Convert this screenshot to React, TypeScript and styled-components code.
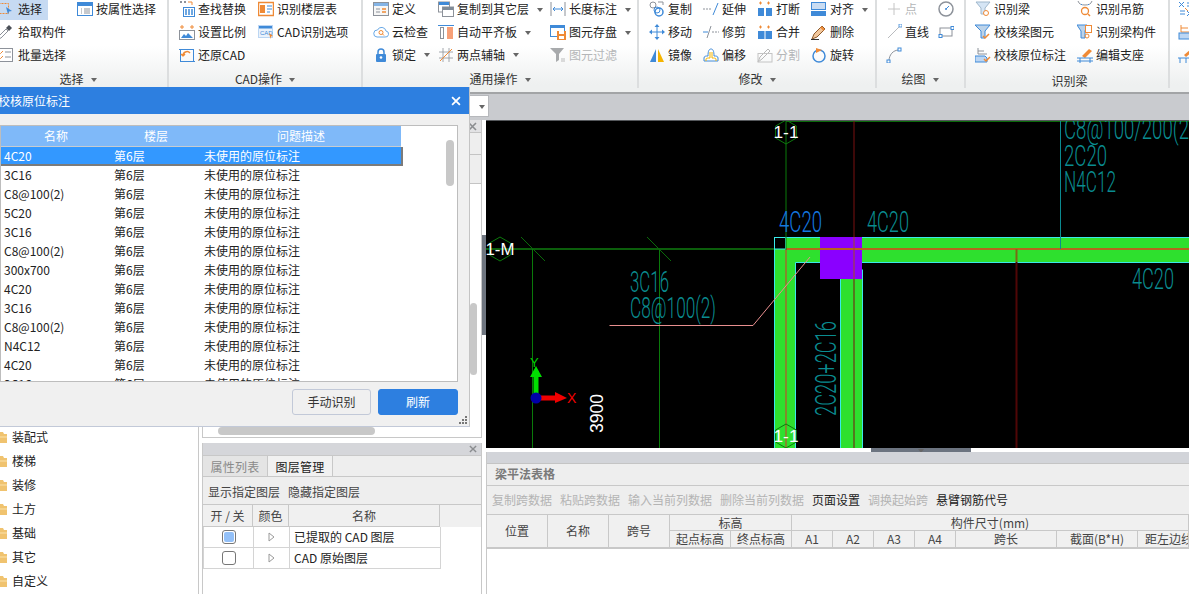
import React from "react";
import styled, { createGlobalStyle } from "styled-components";

const Global = createGlobalStyle`
  html, body { margin: 0; padding: 0; background: #fff; overflow: hidden; }
  body { font-family: "Noto Sans CJK SC", "Liberation Sans", sans-serif; font-size: 12px; color: #222; }
  * { box-sizing: border-box; }
`;

const Page = styled.div`
  position: relative; width: 1189px; height: 594px; overflow: hidden; display: flex; flex-direction: column;
`;

/* ---------- ribbon ---------- */
const Ribbon = styled.div`
  display: flex; height: 94px; flex: none; margin-left: -3px; overflow: hidden;
  background: linear-gradient(#fff 50%, #eef0f0 92%);
  border-bottom: 2px solid #a2a4a6;
`;
const Group = styled.div<{ $w: number; $pl: number }>`
  position: relative; flex: none; width: ${p => p.$w}px; padding-left: ${p => p.$pl}px; height: 88px;
  border-right: 2px solid #dcdedf; display: flex; flex-direction: column;
`;
const Rows = styled.div<{ $cols: string }>`
  margin-top: -3px; height: 69px; flex: none; display: grid; grid-template-columns: ${p => p.$cols}; grid-template-rows: 24px 22px 23px; align-items: center;
`;
const Tool = styled.div<{ $active?: boolean; $gap?: number; $off?: boolean }>`
  display: inline-flex; align-items: center; gap: ${p => p.$gap ?? 3}px; justify-self: start; white-space: nowrap; line-height: 20px; height: 21px;
  color: ${p => (p.$off ? "#b4b6b8" : "#222")};
  background: ${p => (p.$active ? "#c6daf2" : "transparent")};
  padding-right: ${p => (p.$active ? 6 : 0)}px;
  svg { flex: none; }
`;
const Caret = styled.i<{ $ml?: number }>`
  display: inline-block; width: 0; height: 0; margin-left: ${p => p.$ml ?? 5}px; margin-top: 1px;
  border-left: 3px solid transparent; border-right: 3px solid transparent; border-top: 4px solid #666;
`;
const GroupLabel = styled.div<{ $shift?: number; $low?: boolean }>`
  display: flex; align-items: center; justify-content: center; gap: 2px; line-height: 18px; color: #333;
  margin-left: -${p => p.$shift ?? 5}px; padding-right: ${p => p.$shift ?? 5}px;
  margin-top: ${p => (p.$low ? 6 : 4)}px;
`;

/* ---------- band ---------- */
const Band = styled.div`
  height: 26px; flex: none; background: #c9cbcf; padding: 1px 0 0 400px;
`;
const Combo = styled.div`
  width: 89px; height: 22px; background: #fff; border: 1px solid #b6b8bc; display: flex; align-items: center; justify-content: flex-end; padding-right: 3px;
`;

/* ---------- main ---------- */
const Main = styled.div`
  flex: 1; display: flex; min-height: 0;
`;
const Tree = styled.div`
  width: 199px; flex: none; border-right: 1px solid #c8c8c8; display: flex; flex-direction: column; justify-content: flex-end; padding-bottom: 1px;
`;
const TreeItem = styled.div`
  height: 24px; display: flex; align-items: center; gap: 5px; line-height: 24px; color: #222;
`;
const Middle = styled.div`
  width: 280px; flex: none; margin-left: 3px; display: flex; flex-direction: column;
`;
const Upper = styled.div`
  position: relative; height: 318px; flex: none; border: 1px solid #c8c8c8; border-top: 0;
`;
const PanelHead = styled.div<{ $h: number; $bg: string }>`
  height: ${p => p.$h}px; background: ${p => p.$bg}; display: flex; align-items: center; justify-content: flex-end; padding-right: 4px;
`;
const PropRow = styled.div<{ $h: number }>`
  height: ${p => p.$h}px; background: #eeeeee; border-top: 1px solid #c4c4c4;
`;
const VBar = styled.div`
  position: absolute; right: 4px; top: 183px; width: 7px; height: 72px; border-radius: 4px; background: #c8c8c8;
`;
const HBar = styled.div`
  position: absolute; left: 15px; top: 307px; width: 157px; height: 8px; border-radius: 4px; background: #c8c8c8;
`;
const Lower = styled.div`
  margin-top: 5px; flex: 1; border: 1px solid #c8c8c8; border-top: 0; border-bottom: 0; min-height: 0;
`;
const Tabs = styled.div`
  height: 22px; display: flex; background: #eeeeee; border-top: 1px solid #c8c8c8; border-bottom: 1px solid #c8c8c8;
`;
const Tab = styled.div<{ $on?: boolean }>`
  width: 65px; text-align: center; line-height: 21px; letter-spacing: 0.3px; border-right: 1px solid #c8c8c8;
  color: ${p => (p.$on ? "#222" : "#8a8a8a")}; background: ${p => (p.$on ? "#f1f1f1" : "#e4e4e4")};
`;
const LayerBar = styled.div`
  height: 28px; background: #eeeeee; padding: 2px 0 0 5px; display: flex; gap: 8px; align-items: center; line-height: 20px; color: #444; border-bottom: 1px solid #c8c8c8;
`;
const LayerHead = styled.div`
  display: grid; grid-template-columns: 50px 36px 151px; height: 22px; background: #f0f0f0; color: #444; margin-left: 0;
`;
const LayerHeadCell = styled.div`
  text-align: center; line-height: 21px; border-right: 1px solid #c8c8c8; border-bottom: 1px solid #c8c8c8; white-space: pre;
`;
const LayerRow = styled.div`
  display: grid; grid-template-columns: 50px 36px 151px; height: 21px; width: 238px; border-bottom: 1px solid #d4d4d4; border-left: 1px solid #d4d4d4;
`;
const LayerCell = styled.div<{ $text?: boolean }>`
  border-right: 1px solid #d4d4d4; display: flex; align-items: center; justify-content: ${p => (p.$text ? "flex-start" : "center")};
  padding-left: ${p => (p.$text ? 4 : 0)}px; line-height: 20px; white-space: pre; color: #222;
`;
const Check = styled.div<{ $on?: boolean }>`
  width: 14px; height: 14px; border: 1px solid #777; border-radius: 3px; padding: 1px; background: #fff;
  &::after { content: ""; display: block; width: 10px; height: 10px; border-radius: 2px; background: ${p => (p.$on ? "#93c0f8" : "transparent")}; }
`;

const Gutter = styled.div`
  width: 4px; flex: none; background: #fff; padding-top: 115px;
`;
const GutterHandle = styled.div`
  width: 4px; height: 100px; background: #6f7680;
`;
const Right = styled.div`
  flex: 1; min-width: 0; display: flex; flex-direction: column;
`;
const CanvasWrap = styled.div`
  height: 328px; flex: none; background: #000; border-top: 1px solid #55585c;
  svg { display: block; }
`;
const Splitter = styled.div`
  height: 4px; flex: none; padding-left: 385px; background: #fff;
`;
const SplitHandle = styled.div`
  width: 100px; height: 4px; background: #6c7480; display: flex; justify-content: center;
`;
const Bottom = styled.div`
  flex: 1; border-left: 1px solid #c8c8c8; min-height: 0;
`;
const BottomHead = styled.div`
  height: 12px; background: #d2d4d9; border-bottom: 1px solid #c4c4c4;
`;
const BottomTitle = styled.div`
  height: 22px; background: #eeeeee; border-bottom: 1px solid #c8c8c8; padding-left: 8px; line-height: 20px; font-weight: 700; color: #7a7a7a;
`;
const BottomBar = styled.div`
  height: 29px; background: #eeeeee; border-bottom: 1px solid #c8c8c8; padding-left: 5px; display: flex; gap: 8px; align-items: center; line-height: 20px; white-space: nowrap;
`;
const BarItem = styled.span<{ $off?: boolean }>`
  color: ${p => (p.$off ? "#b4b4b4" : "#222")};
`;
const BeamGrid = styled.div`
  display: grid; height: 34px; background: #f0f0f0; color: #444; overflow: hidden; border-bottom: 1px solid #c8c8c8;
  grid-template-columns: 61px 61px 61px 61px 61px 41px 41px 41px 41px 101px 81px 1fr; grid-template-rows: 16px 17px;
`;
const BeamCell = styled.div<{ $col?: number; $row?: number; $clip?: boolean }>`
  grid-column: span ${p => p.$col ?? 1}; grid-row: span ${p => p.$row ?? 1};
  display: flex; align-items: center; justify-content: ${p => (p.$clip ? "flex-start" : "center")}; padding-left: ${p => (p.$clip ? 7 : 0)}px;
  white-space: nowrap; overflow: hidden; line-height: 16px;
  border-right: 1px solid #c8c8c8; border-bottom: 1px solid #c8c8c8;
`;

/* ---------- dialog ---------- */
const Dialog = styled.div`
  position: absolute; left: -12px; top: 87px; width: 482px; height: 340px; background: #f0f0f0;
  border-right: 1px solid #c4c4c4; border-bottom: 1px solid #c2c9d8; display: flex; flex-direction: column;
`;
const DialogTitle = styled.div`
  height: 27px; flex: none; background: #2d7fe0; color: #fff; padding: 0 8px 0 10px; display: flex; align-items: center; justify-content: space-between; line-height: 27px;
`;
const ListBox = styled.div`
  position: relative; margin: 11px 0 0 12px; width: 458px; height: 257px; flex: none; border: 1px solid #bdbdbd; background: #fff; overflow: hidden;
`;
const ListHead = styled.div`
  display: grid; grid-template-columns: 110px 90px 200px; width: 400px; height: 21px; background: #7fb9f9; color: #fff; border-bottom: 1px solid #c8ccd0;
`;
const ListHeadCell = styled.div`
  text-align: center; line-height: 20px;
`;
const ListRow = styled.div<{ $sel?: boolean }>`
  display: grid; grid-template-columns: 110px 90px 200px; height: 19px; width: ${p => (p.$sel ? 402 : 400)}px; line-height: 18px;
  background: ${p => (p.$sel ? "#3398ff" : "transparent")}; color: ${p => (p.$sel ? "#fff" : "#222")};
  border-right: ${p => (p.$sel ? "2px solid #7b7b7b" : "0")}; border-bottom: ${p => (p.$sel ? "2px solid #7b7b7b" : "0")};
`;
const ListCell = styled.div`
  padding-left: 3px; white-space: nowrap;
`;
const ListScroll = styled.div`
  position: absolute; right: 3px; top: 14px; width: 8px; height: 46px; border-radius: 4px; background: #c8c8c8;
`;
const DialogFoot = styled.div`
  width: 470px; display: flex; justify-content: flex-end; gap: 7px; margin-top: 7px;
`;
const Btn = styled.button<{ $primary?: boolean }>`
  width: ${p => (p.$primary ? 80 : 79)}px; height: 26px; border-radius: 3px; font: inherit; line-height: 20px; padding: 0;
  border: 1px solid ${p => (p.$primary ? "#2d7fe0" : "#c2c9d8")};
  background: ${p => (p.$primary ? "#2d7fe0" : "#f0f0f0")}; color: ${p => (p.$primary ? "#fff" : "#333")};
`;
const Grip = styled.div`
  position: absolute; right: 2px; bottom: 2px; width: 8px; height: 8px; display: grid; grid-template-columns: repeat(3, 2px); grid-template-rows: repeat(3, 2px); gap: 1px;
`;
const GripDot = styled.span<{ $c: number; $r: number }>`
  grid-column: ${p => p.$c}; grid-row: ${p => p.$r}; background: #777;
`;

/* ---------- icons ---------- */
const B = "#3f8ad8", O = "#ef8a36", G = "#8d929a", L = "#bcd6f3";
const S: React.FC<{ children: React.ReactNode }> = ({ children }) => (
  <svg width="16" height="16" viewBox="0 0 16 16" fill="none">{children}</svg>
);
const icons: Record<string, React.ReactNode> = {
  select: <><rect x="1.5" y="2.5" width="10" height="10" stroke={O} strokeDasharray="2 1" /><path d="M9 6l6 4-3 .6-1 3z" fill={B} /></>,
  attr: <><rect x=".5" y="1.5" width="15" height="13" fill="#fff" stroke={B} /><rect x="1" y="2" width="14" height="3" fill={B} /><path d="M4 8h1M7 8h6M4 10h1M7 10h6M4 12h1M7 12h6" stroke={G} /></>,
  pick: <><path d="M1 15l1-3 7-7 2 2-7 7z" fill="#fff" stroke={G} /><path d="M9 4l3-3 3 3-3 3z" fill="#4a4f57" /></>,
  batch: <><rect x=".5" y="1.5" width="15" height="13" fill="#fff" stroke={G} /><path d="M2 5l1.5 1.5L6 4M2 10l1.5 1.5L6 9" stroke={O} /><path d="M8 5h6M8 10h6" stroke={G} /></>,
  find: <><path d="M1 1h2M5 1h2" stroke={G} strokeWidth="2" /><path d="M9 1h4v3" stroke={O} /><rect x="4.500" y="6.500" width="11" height="9" fill="#fff" stroke={B} /><path d="M7 8v6M10 8v6M13 8v6" stroke={B} strokeWidth="1.500" /></>,
  floor: <><rect x=".5" y="1.5" width="15" height="13" fill="#fff" stroke={O} strokeWidth="1.500" /><rect x="2" y="4" width="5" height="8" fill={O} /><path d="M9 5h5M9 8h5M9 11h3" stroke={B} /></>,
  scale: <><path d="M1 3h4M3 1v4M11 3h4M13 1v4" stroke={O} /><rect x=".5" y="6.500" width="15" height="9" fill="#fff" stroke={G} /><path d="M2 14l3-4 2 2 2-3 5 5z" fill={B} /></>,
  cadopt: <><rect x=".5" y="1.5" width="14" height="12" fill="#eaf2fb" stroke={L} /><rect x="1" y="2" width="13" height="2.500" fill={B} /><text x="2" y="11" fontSize="6" fill={B} fontFamily="Liberation Sans">CAD</text><path d="M11 9l4 3-2 .5-.5 2.500z" fill={O} /></>,
  restore: <><rect x="1.500" y="2.500" width="13" height="12" stroke={B} /><path d="M4 9a4 4 0 0 1 7-3M4 9l-2-2M4 9l2-2" stroke={O} strokeWidth="1.500" /><path d="M0 2.500h3M13 14.500h3" stroke={B} /></>,
  define: <><rect x=".5" y="1.500" width="15" height="13" fill="#f6f6f6" stroke={G} /><rect x="1" y="2" width="14" height="3" fill="#84b4e6" /><path d="M3 8h4M3 11h4" stroke={G} /><path d="M9 8h4M9 11h4" stroke={O} strokeWidth="1.500" /></>,
  cloud: <><path d="M4 13h8a3 3 0 0 0 1-6 4.500 4.500 0 0 0-8.500-1A3.500 3.500 0 0 0 4 13z" fill="#fff" stroke="#68a8e6" /><circle cx="8" cy="8.500" r="2" stroke={O} /><path d="M9.500 10l1.500 1.500" stroke={O} /></>,
  lock: <><path d="M5 7V5a3 3 0 0 1 6 0v2" stroke={B} strokeWidth="1.500" /><rect x="3" y="7" width="10" height="8" rx="1" fill={B} /><circle cx="8" cy="10.500" r="1.300" fill="#fff" /></>,
  copyLayer: <><rect x=".5" y="1" width="11" height="10" fill="#fff" stroke={G} /><rect x="1" y="1" width="10" height="3" fill={B} /><rect x="4.500" y="6" width="11" height="9.500" fill="#fff" stroke={G} /><rect x="5" y="6" width="10" height="3" fill="#7f8b98" /></>,
  level: <><path d="M0 1.500h16" stroke={B} /><rect x="2.500" y="3.500" width="3" height="11" fill="#fff" stroke={G} /><rect x="9" y="3" width="6" height="12" fill="#f7a078" /></>,
  axis: <><path d="M5 1v14M11 1v14M1 5h14M1 11h14" stroke={G} strokeWidth=".8" /><path d="M2 14L14 2" stroke={O} /></>,
  length: <><path d="M1 1v14M15 1v14" stroke={G} /><path d="M3 8h10M3 8l2-2M3 8l2 2M13 8l-2-2M13 8l-2 2" stroke={B} /></>,
  save: <><rect x=".5" y="1.500" width="14" height="11" fill="#fff" stroke={B} /><rect x="1" y="2" width="13" height="2" fill={B} /><rect x="7" y="7" width="9" height="9" fill={O} /><rect x="9" y="7" width="5" height="3" fill="#fff" /><rect x="9" y="12" width="5" height="3" fill="#fff" /></>,
  filter: <><path d="M0 1h14L9 7v6l-3 2V7z" fill="#a8aaac" /><path d="M11 12h4M11 14h4" stroke="#bbb" /></>,
  copy: <><circle cx="4" cy="4" r="3" stroke={G} /><circle cx="10" cy="11" r="4" stroke={B} strokeWidth="1.500" /><circle cx="8" cy="9" r="3" stroke={B} /><path d="M9 1h5v3" stroke={G} /></>,
  move: <><path d="M8 2v12M2 8h12" stroke={B} /><path d="M8 0l2.500 3h-5zM8 16l2.500-3h-5zM0 8l3-2.500v5zM16 8l-3-2.500v5z" fill={B} /></>,
  mirror: <><path d="M7 2v13H1z" fill={B} /><path d="M9 2v13h6z" fill="#f5b400" /></>,
  extend: <><path d="M0 8h8" stroke={G} strokeDasharray="2 1" /><path d="M10 14l5-12" stroke={B} /></>,
  trim: <><path d="M0 8h5" stroke={B} /><path d="M9 8h7" stroke={G} strokeDasharray="2 1" /><path d="M4 14l4-12" stroke={G} /></>,
  offset: <><path d="M1 14v-3c0-2 2-2 4-2 0-5 1-7 3-7s3 2 3 7c2 0 4 0 4 2v3z" fill="#fff" stroke={B} /><path d="M3 14v-2c0-1 2-1 4-1V5M9 5v6c2 0 4 0 4 1v2" stroke="#f5b400" /></>,
  breakI: <><path d="M2 2h3M3.500 0.500v3M10 2h3M11.500.5v3" stroke={O} /><rect x="1" y="7" width="6" height="8" fill={B} /><rect x="9" y="7" width="6" height="8" fill={B} /></>,
  merge: <><path d="M2 3h3M3.500 1.500v3M10 3h3M11.500 1.500v3" stroke={O} /><rect x="1" y="7" width="14" height="8" fill={B} /><path d="M8 7v8" stroke="#fff" /></>,
  split: <><path d="M1 15l2-5 8-8 2 2-8 8z" stroke="#b8b8b8" /><rect x="1" y="6.500" width="14" height="8.500" stroke="#c4c4c4" /></>,
  align: <><rect x=".5" y="1.500" width="14" height="7" fill="#c9dcf2" stroke={B} /><rect x="0" y="10" width="15" height="5" fill={B} /></>,
  del: <><path d="M1 15l2-5 8-8 3 3-8 8z" fill="#f2c79c" stroke="#8d5a2b" /><path d="M10 3l3 3" stroke={O} strokeWidth="2" /><path d="M0 15.500h8" stroke="#333" /></>,
  rotate: <><circle cx="8" cy="9" r="6" stroke={B} strokeWidth="1.500" /><path d="M5 1l6 2-6 3z" fill={O} /></>,
  point: <path d="M8 2v12M2 8h12" stroke="#c4c4c4" />,
  circle: <><circle cx="8" cy="8" r="7" stroke={G} strokeWidth="1.500" /><path d="M8 8l3-3" stroke={B} /><circle cx="8" cy="8" r="1" fill={B} /></>,
  line: <><path d="M2 14L14 2" stroke="#b9bbbe" /><rect x="13" y="0" width="3" height="3" fill="#fff" stroke={B} strokeWidth=".8" /></>,
  rect: <><rect x="2" y="4" width="12" height="8" stroke={G} /><rect x="1" y="10.500" width="3" height="3" fill="#fff" stroke={B} /><rect x="13" y="2.500" width="3" height="3" fill="#fff" stroke={B} /></>,
  arc: <><path d="M3 14C3 8 7 3 13 3" stroke={G} /><rect x="1" y="13" width="3" height="3" fill="#fff" stroke={B} /><rect x="12" y="1" width="3" height="3" fill="#fff" stroke={B} /></>,
  beam: <><path d="M1 1h14l-5 6v6H6V7z" fill="#d5e5f5" stroke="#9fb7cc" /><circle cx="11" cy="12" r="2.500" fill="#fff" stroke={O} /></>,
  beamChk: <><path d="M0 1h15l-5 6v7H6V7z" fill="#bcd3ea" stroke={B} /><path d="M8 12l2 2 4-4" stroke={O} strokeWidth="1.500" /></>,
  origChk: <><path d="M3 1v6h9M3 4h6" stroke={G} /><path d="M0 9h10l2 2v4H0z" fill="#bcd6f3" stroke={B} /><path d="M9 12l2 2 4-4" stroke={O} strokeWidth="1.500" /></>,
  hang: <><path d="M1 0c1 3 3 4 7 4s6-1 7-4" stroke={G} /><path d="M4 3l1 1M11 3l1 1" stroke={B} /><circle cx="8" cy="10" r="3.500" stroke={O} strokeWidth="1.300" /><path d="M11 13l2 2" stroke={O} strokeWidth="1.500" /></>,
  beamComp: <><path d="M0 1h10L8 7v7H4V7z" fill="#bcd3ea" stroke={B} /><rect x="8.500" y="1.500" width="6" height="7" fill="#fff" stroke={O} /><circle cx="10" cy="12" r="2" stroke={O} /></>,
  support: <><path d="M5 9l7-7 3 2-7 7z" fill={O} /><path d="M0 11h16M0 14h16M3 11v5M13 11v5" stroke={B} /></>,
  r1: <><path d="M1 1l5 5M6 1L1 6M9 2h6M9 5h6M2 10h5M2 13h5M9 10l5 5M14 10l-5 5" stroke={B} /><path d="M7 7l3 3" stroke={O} /></>,
  r2: <><path d="M3 1v7h10M3 4h7" stroke={O} /><rect x="1" y="9" width="14" height="6" fill="#bcd6f3" stroke={B} /></>,
  r3: <><path d="M6 8l7-6 2 2-7 6z" fill={O} /><path d="M0 11h16M2 11v5M14 11v5M8 11v5" stroke={B} /></>,
};
const Ic: React.FC<{ n: string }> = ({ n }) => <S>{icons[n]}</S>;
const T: React.FC<{ n?: string; t?: string; caret?: boolean; off?: boolean; active?: boolean; gap?: number }> = ({ n, t, caret, off, active, gap }) => (
  <Tool $off={off} $active={active} $gap={gap}>
    {n && <Ic n={n} />}
    {t && <span>{t}</span>}
    {caret && <Caret />}
  </Tool>
);
const Close: React.FC<{ c?: string; s?: number }> = ({ c = "#fff", s = 9 }) => (
  <svg width={s} height={s} viewBox="0 0 9 9"><path d="M1 1l7 7M8 1L1 8" stroke={c} strokeWidth="1.600" /></svg>
);
const Folder = () => (
  <svg width="7" height="12" viewBox="0 0 7 12"><path d="M0 1h3l1 2h3v9H0z" fill="#f0c36f" /><path d="M0 6h7" stroke="#fbe2ac" /></svg>
);
const TriIcon = () => (
  <svg width="7" height="10" viewBox="0 0 7 10"><path d="M1 1l5 4-5 4z" fill="#fff" stroke="#9a9a9a" /></svg>
);

/* ---------- canvas drawing ---------- */
const CadT: React.FC<{ x: number; y: number; w: number; c?: string; rot?: boolean; children: string }> = ({ x, y, w, c = "#0a8c90", rot, children }) => (
  <text x={x} y={y} fontFamily="Roboto" fontWeight={300} fontSize="30" fill={c} textLength={w} lengthAdjust="spacingAndGlyphs"
    transform={rot ? `rotate(-90 ${x} ${y})` : undefined}>{children}</text>
);
const hex = (cx: number, cy: number, r = 12) =>
  [0, 1, 2, 3, 4, 5].map(i => { const a = (Math.PI / 3) * i - Math.PI / 2; return `${cx + r * Math.cos(a)},${cy + r * Math.sin(a)}`; }).join(" ");
const Hex: React.FC<{ x: number; y: number; t: string; w: number }> = ({ x, y, t, w }) => (
  <>
    <polygon points={hex(x, y)} fill="none" stroke="#0c7a0c" />
    <text x={x - w / 2} y={y + 6} fontFamily="Liberation Sans" fontSize="16" fill="#fff" textLength={w} lengthAdjust="spacingAndGlyphs">{t}</text>
  </>
);
const Drawing = () => (
  <svg width="703" height="327" viewBox="486 121 703 327">
    <rect x="486" y="120" width="703" height="328" fill="#000" />
    {/* beams */}
    <path d="M774.500 460V237.500H1195V262.500H795.500V460z" fill="#2ee02e" stroke="#39eaea" />
    <rect x="840.500" y="270" width="22" height="190" fill="#2ee02e" stroke="#39eaea" />
    <rect x="774.500" y="237.500" width="11" height="11.500" fill="#000" stroke="#39eaea" />
    <rect x="820" y="237" width="42" height="42" fill="#8a00ff" />
    {/* axes */}
    <path d="M786 121h403" stroke="#0a6a0a" strokeWidth="2" />
    <path d="M486 249h288" stroke="#0b5e0b" strokeWidth="2" />
    <path d="M786 249h403" stroke="#b4651e" strokeWidth="2" />
    <path d="M532.500 249v199M659.500 249v199M786 120v130" stroke="#0a7a0a" />
    <path d="M521 237l24 24M647 237l24 24" stroke="#0a6a0a" />
    <path d="M786 250v198" stroke="#d8332b" />
    <path d="M854 120v117M854 279v169" stroke="#7a1010" />
    <path d="M854 237v42" stroke="#a05020" />
    <path d="M1016.500 262v186" stroke="#500606" strokeWidth="2" />
    <path d="M1016.500 249v13" stroke="#7a6a14" strokeWidth="2" />
    <path d="M1060.500 120v129" stroke="#0b8a90" />
    {/* leader */}
    <path d="M609.500 325.500H753L810 257" fill="none" stroke="#e88f8f" />
    {/* labels */}
    <CadT x={779} y={232} w={43} c="#1478e0">4C20</CadT>
    <CadT x={867} y={232} w={42}>4C20</CadT>
    <CadT x={1132} y={289} w={42}>4C20</CadT>
    <CadT x={630} y={292} w={39}>3C16</CadT>
    <CadT x={630} y={318} w={86}>C8@100(2)</CadT>
    <CadT x={836} y={416} w={95} rot>2C20+2C16</CadT>
    <CadT x={1064} y={139} w={125}>C8@100/200(2</CadT>
    <CadT x={1064} y={166} w={43}>2C20</CadT>
    <CadT x={1064} y={192} w={52}>N4C12</CadT>
    <text x={603} y={433} fontFamily="Liberation Sans" fontSize="19" fill="#fff" textLength={39} lengthAdjust="spacingAndGlyphs" transform="rotate(-90 603 433)">3900</text>
    <Hex x={786} y={132} t="1-1" w={25} />
    <Hex x={786} y={436} t="1-1" w={25} />
    <Hex x={500} y={249} t="1-M" w={29} />
    {/* UCS */}
    <path d="M536 398v-27" stroke="#00e000" strokeWidth="5" />
    <path d="M536 366l6 11h-12z" fill="#00e000" />
    <path d="M536 398h22" stroke="#f00000" strokeWidth="5" />
    <path d="M567 398l-12-6v11z" fill="#f00000" />
    <circle cx="536" cy="398" r="5.500" fill="#0000a8" />
    <text x={530} y={367} fontFamily="Liberation Sans" fontSize="13" fill="#00d000">Y</text>
    <text x={567} y={403} fontFamily="Liberation Sans" fontSize="14" fill="#f00000">X</text>
  </svg>
);

const rows = ["4C20", "3C16", "C8@100(2)", "5C20", "3C16", "C8@100(2)", "300x700", "4C20", "3C16", "C8@100(2)", "N4C12", "4C20", "3C16"];
const tree = ["装配式", "楼梯", "装修", "土方", "基础", "其它", "自定义"];

export default function App() {
  return (
    <Page>
      <Global />
      <Ribbon>
        <Group $w={172} $pl={0}>
          <Rows $cols="80px 1fr">
            <T n="select" t="选择" active gap={5} /><T n="attr" t="按属性选择" />
            <T n="pick" t="拾取构件" gap={5} /><span />
            <T n="batch" t="批量选择" gap={5} /><span />
          </Rows>
          <GroupLabel $shift={4}>选择<Caret /></GroupLabel>
        </Group>
        <Group $w={194} $pl={10}>
          <Rows $cols="79px 1fr">
            <T n="find" t="查找替换" /><T n="floor" t="识别楼层表" />
            <T n="scale" t="设置比例" /><T n="cadopt" t="CAD识别选项" />
            <T n="restore" t="还原CAD" /><span />
          </Rows>
          <GroupLabel>CAD操作<Caret /></GroupLabel>
        </Group>
        <Group $w={276} $pl={10}>
          <Rows $cols="65px 112px 1fr">
            <T n="define" t="定义" /><T n="copyLayer" t="复制到其它层" caret /><T n="length" t="长度标注" caret />
            <T n="cloud" t="云检查" /><T n="level" t="自动平齐板" caret /><T n="save" t="图元存盘" caret />
            <T n="lock" t="锁定" caret /><T n="axis" t="两点辅轴" caret /><T n="filter" t="图元过滤" off />
          </Rows>
          <GroupLabel>通用操作<Caret /></GroupLabel>
        </Group>
        <Group $w={238} $pl={10}>
          <Rows $cols="54px 54px 54px 1fr">
            <T n="copy" t="复制" /><T n="extend" t="延伸" /><T n="breakI" t="打断" /><T n="align" t="对齐" caret />
            <T n="move" t="移动" /><T n="trim" t="修剪" /><T n="merge" t="合并" /><T n="del" t="删除" />
            <T n="mirror" t="镜像" /><T n="offset" t="偏移" /><T n="split" t="分割" off /><T n="rotate" t="旋转" />
          </Rows>
          <GroupLabel>修改<Caret /></GroupLabel>
        </Group>
        <Group $w={89} $pl={9}>
          <Rows $cols="52px 1fr">
            <T n="point" t="点" off /><T n="circle" />
            <T n="line" t="直线" /><T n="rect" />
            <T n="arc" /><span />
          </Rows>
          <GroupLabel>绘图<Caret /></GroupLabel>
        </Group>
        <Group $w={204} $pl={9}>
          <Rows $cols="102px 1fr">
            <T n="beam" t="识别梁" /><T n="hang" t="识别吊筋" />
            <T n="beamChk" t="校核梁图元" /><T n="beamComp" t="识别梁构件" />
            <T n="origChk" t="校核原位标注" /><T n="support" t="编辑支座" />
          </Rows>
          <GroupLabel $low $shift={2}>识别梁</GroupLabel>
        </Group>
        <Group $w={30} $pl={8}>
          <Rows $cols="1fr">
            <T n="r1" />
            <T n="r2" />
            <T n="r3" />
          </Rows>
        </Group>
      </Ribbon>
      <Band>
        <Combo><Caret $ml={0} /></Combo>
      </Band>
      <Main>
        <Tree>
          {tree.map(t => <TreeItem key={t}><Folder />{t}</TreeItem>)}
        </Tree>
        <Middle>
          <Upper>
            <PanelHead $h={12} $bg="#e2e2e4"><Close c="#8b8d90" /></PanelHead>
            <PropRow $h={22} />
            <PropRow $h={29} />
            <PropRow $h={1} />
            <VBar />
            <HBar />
          </Upper>
          <Lower>
            <PanelHead $h={12} $bg="#d5d6da"><Close c="#8b8d90" s={8} /></PanelHead>
            <Tabs>
              <Tab>属性列表</Tab>
              <Tab $on>图层管理</Tab>
            </Tabs>
            <LayerBar><span>显示指定图层</span><span>隐藏指定图层</span></LayerBar>
            <LayerHead>
              <LayerHeadCell>开 / 关</LayerHeadCell>
              <LayerHeadCell>颜色</LayerHeadCell>
              <LayerHeadCell>名称</LayerHeadCell>
            </LayerHead>
            <LayerRow>
              <LayerCell><Check $on /></LayerCell>
              <LayerCell><TriIcon /></LayerCell>
              <LayerCell $text>已提取的 CAD 图层</LayerCell>
            </LayerRow>
            <LayerRow>
              <LayerCell><Check /></LayerCell>
              <LayerCell><TriIcon /></LayerCell>
              <LayerCell $text>CAD 原始图层</LayerCell>
            </LayerRow>
          </Lower>
        </Middle>
        <Gutter><GutterHandle /></Gutter>
        <Right>
          <CanvasWrap><Drawing /></CanvasWrap>
          <Splitter><SplitHandle><Caret $ml={0} /></SplitHandle></Splitter>
          <Bottom>
            <BottomHead />
            <BottomTitle>梁平法表格</BottomTitle>
            <BottomBar>
              <BarItem $off>复制跨数据</BarItem>
              <BarItem $off>粘贴跨数据</BarItem>
              <BarItem $off>输入当前列数据</BarItem>
              <BarItem $off>删除当前列数据</BarItem>
              <BarItem>页面设置</BarItem>
              <BarItem $off>调换起始跨</BarItem>
              <BarItem>悬臂钢筋代号</BarItem>
            </BottomBar>
            <BeamGrid>
              <BeamCell $row={2}>位置</BeamCell>
              <BeamCell $row={2}>名称</BeamCell>
              <BeamCell $row={2}>跨号</BeamCell>
              <BeamCell $col={2}>标高</BeamCell>
              <BeamCell $col={7}>构件尺寸(mm)</BeamCell>
              <BeamCell>起点标高</BeamCell>
              <BeamCell>终点标高</BeamCell>
              <BeamCell>A1</BeamCell>
              <BeamCell>A2</BeamCell>
              <BeamCell>A3</BeamCell>
              <BeamCell>A4</BeamCell>
              <BeamCell>跨长</BeamCell>
              <BeamCell>截面(B*H)</BeamCell>
              <BeamCell $clip>距左边线</BeamCell>
            </BeamGrid>
          </Bottom>
        </Right>
      </Main>
      <Dialog>
        <DialogTitle>校核原位标注<Close s={10} /></DialogTitle>
        <ListBox>
          <ListHead>
            <ListHeadCell>名称</ListHeadCell>
            <ListHeadCell>楼层</ListHeadCell>
            <ListHeadCell>问题描述</ListHeadCell>
          </ListHead>
          {rows.map((r, i) => (
            <ListRow key={i} $sel={i === 0}>
              <ListCell>{r}</ListCell>
              <ListCell>第6层</ListCell>
              <ListCell>未使用的原位标注</ListCell>
            </ListRow>
          ))}
          <ListScroll />
        </ListBox>
        <DialogFoot>
          <Btn>手动识别</Btn>
          <Btn $primary>刷新</Btn>
        </DialogFoot>
        <Grip>
          <GripDot $c={3} $r={1} />
          <GripDot $c={2} $r={2} /><GripDot $c={3} $r={2} />
          <GripDot $c={1} $r={3} /><GripDot $c={2} $r={3} /><GripDot $c={3} $r={3} />
        </Grip>
      </Dialog>
    </Page>
  );
}
